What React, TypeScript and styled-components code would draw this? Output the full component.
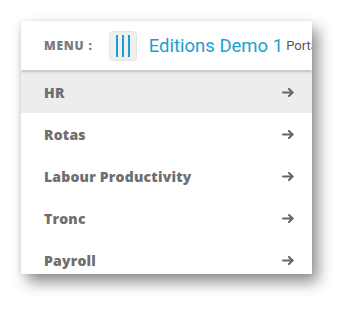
import React from 'react';
import styled, { createGlobalStyle } from 'styled-components';

const GlobalStyle = createGlobalStyle`
  html, body {
    margin: 0;
    padding: 0;
    background: #ffffff;
  }
`;

const Page = styled.div`
  width: 354px;
  height: 317px;
  padding: 21px 0 0 21px;
  box-sizing: border-box;
  font-family: 'Open Sans', 'Liberation Sans', sans-serif;
`;

const Panel = styled.div`
  width: 291px;
  height: 253px;
  background: #ffffff;
  overflow: hidden;
  display: flex;
  flex-direction: column;
  box-shadow: 6px 8px 14px rgba(0, 0, 0, 0.45), -1px 0 4px rgba(0, 0, 0, 0.08);
`;

const Header = styled.div`
  position: relative;
  z-index: 1;
  height: 49px;
  flex-shrink: 0;
  display: flex;
  align-items: center;
  padding-left: 23px;
  background: #ffffff;
  box-shadow: 0 1px 3px rgba(0, 0, 0, 0.35);
  white-space: nowrap;
`;

const MenuLabel = styled.span`
  font-size: 12px;
  font-weight: 800;
  letter-spacing: 0.8px;
  color: #7a7a7a;
  margin-right: 16px;
`;

const BurgerButton = styled.button`
  width: 28px;
  height: 30px;
  flex-shrink: 0;
  border: 1px solid #e4e4e4;
  border-radius: 4px;
  background: #f0f0f0;
  padding: 0;
  display: flex;
  align-items: center;
  justify-content: center;
  margin-right: 12px;
`;

const Title = styled.span`
  font-family: Roboto, 'Liberation Sans', sans-serif;
  font-size: 18.5px;
  color: #1ba1d1;
`;

const Subtitle = styled.span`
  font-family: Roboto, 'Liberation Sans', sans-serif;
  font-size: 13px;
  color: #555555;
  margin-left: 3px;
`;

const List = styled.div`
  display: flex;
  flex-direction: column;
  padding-top: 1px;
`;

const Item = styled.div<{ $active?: boolean }>`
  height: 42px;
  flex-shrink: 0;
  display: flex;
  align-items: center;
  justify-content: space-between;
  padding: 0 18px 0 23px;
  background: ${p => (p.$active ? '#ededed' : '#ffffff')};
  font-size: 14px;
  font-weight: 800;
  letter-spacing: 0.2px;
  color: #6e6e6e;
`;

const ArrowIcon = () => (
  <svg width="12" height="9" viewBox="0 0 12 9">
    <g fill="none" stroke="#666666" strokeWidth="2" strokeLinecap="round" strokeLinejoin="round">
      <line x1="1" y1="4.5" x2="10.5" y2="4.5" />
      <polyline points="7,1 10.5,4.5 7,8" />
    </g>
  </svg>
);

const items = ['HR', 'Rotas', 'Labour Productivity', 'Tronc', 'Payroll'];

export default function App() {
  return (
    <Page>
      <GlobalStyle />
      <Panel>
        <Header>
          <MenuLabel>MENU :</MenuLabel>
          <BurgerButton aria-label="menu">
            <svg width="16" height="24" viewBox="0 0 16 24">
              <g stroke="#1ba1d1" strokeWidth="2">
                <line x1="2" y1="1" x2="2" y2="23" />
                <line x1="8" y1="1" x2="8" y2="23" />
                <line x1="14" y1="1" x2="14" y2="23" />
              </g>
            </svg>
          </BurgerButton>
          <Title>Editions Demo 1</Title>
          <Subtitle>Portal</Subtitle>
        </Header>
        <List>
          {items.map((label, i) => (
            <Item key={label} $active={i === 0}>
              <span>{label}</span>
              <ArrowIcon />
            </Item>
          ))}
        </List>
      </Panel>
    </Page>
  );
}
